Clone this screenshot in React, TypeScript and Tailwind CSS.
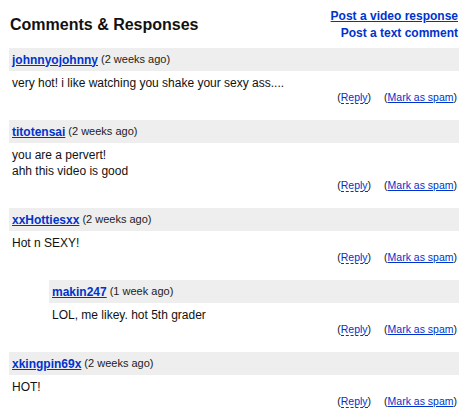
const comments = [
  {
    user: 'johnnyojohnny',
    when: '(2 weeks ago)',
    lines: ['very hot! i like watching you shake your sexy ass....'],
  },
  {
    user: 'titotensai',
    when: '(2 weeks ago)',
    lines: ['you are a pervert!', 'ahh this video is good'],
  },
  {
    user: 'xxHottiesxx',
    when: '(2 weeks ago)',
    lines: ['Hot n SEXY!'],
  },
  {
    user: 'makin247',
    when: '(1 week ago)',
    lines: ['LOL, me likey. hot 5th grader'],
    reply: true,
  },
  {
    user: 'xkingpin69x',
    when: '(2 weeks ago)',
    lines: ['HOT!'],
  },
];

function Comment({ user, when, lines, reply }: (typeof comments)[number]) {
  return (
    <div className={reply ? 'ml-[40px]' : ''}>
      <div className="flex h-[23px] items-center bg-[#eeeeee] px-[3px]">
        <a href="#" className="text-[12px] font-bold text-[#0033cc] underline">
          {user}
        </a>
        <span className="ml-[3px] text-[11px] text-[#222]">{when}</span>
      </div>
      <div className="px-[3px] pt-[4px] text-[12px] leading-[16px] text-[#111]">
        {lines.map((l) => (
          <div key={l}>{l}</div>
        ))}
      </div>
      <div className="flex justify-end gap-[13px] pr-[2px] text-[10.5px] leading-[12px] text-[#111]">
        <span>
          (<a href="#" className="border-b border-dashed border-[#0033cc] text-[#0033cc]">Reply</a>)
        </span>
        <span>
          (<a href="#" className="text-[#0033cc] underline">Mark as spam</a>)
        </span>
      </div>
    </div>
  );
}

export default function App() {
  return (
    <div className="min-h-[418px] w-[469px] bg-white font-['Liberation_Sans',Arial,sans-serif]">
      <div className="ml-[9px] w-[450px]">
        <div className="flex items-start justify-between pt-[8px] mb-[6px]">
          <h2 className="ml-[1px] mt-[7px] text-[16px] font-bold leading-[20px] text-[#111]">
            Comments &amp; Responses
          </h2>
          <div className="flex flex-col items-end pr-[1px] text-[12px] font-bold leading-[17px]">
            <a href="#" className="text-[#0033cc] underline">Post a video response</a>
            <a href="#" className="text-[#0033cc]">Post a text comment</a>
          </div>
        </div>
        <div className="flex flex-col gap-[17px]">
          {comments.map((c) => (
            <Comment key={c.user} {...c} />
          ))}
        </div>
      </div>
    </div>
  );
}
